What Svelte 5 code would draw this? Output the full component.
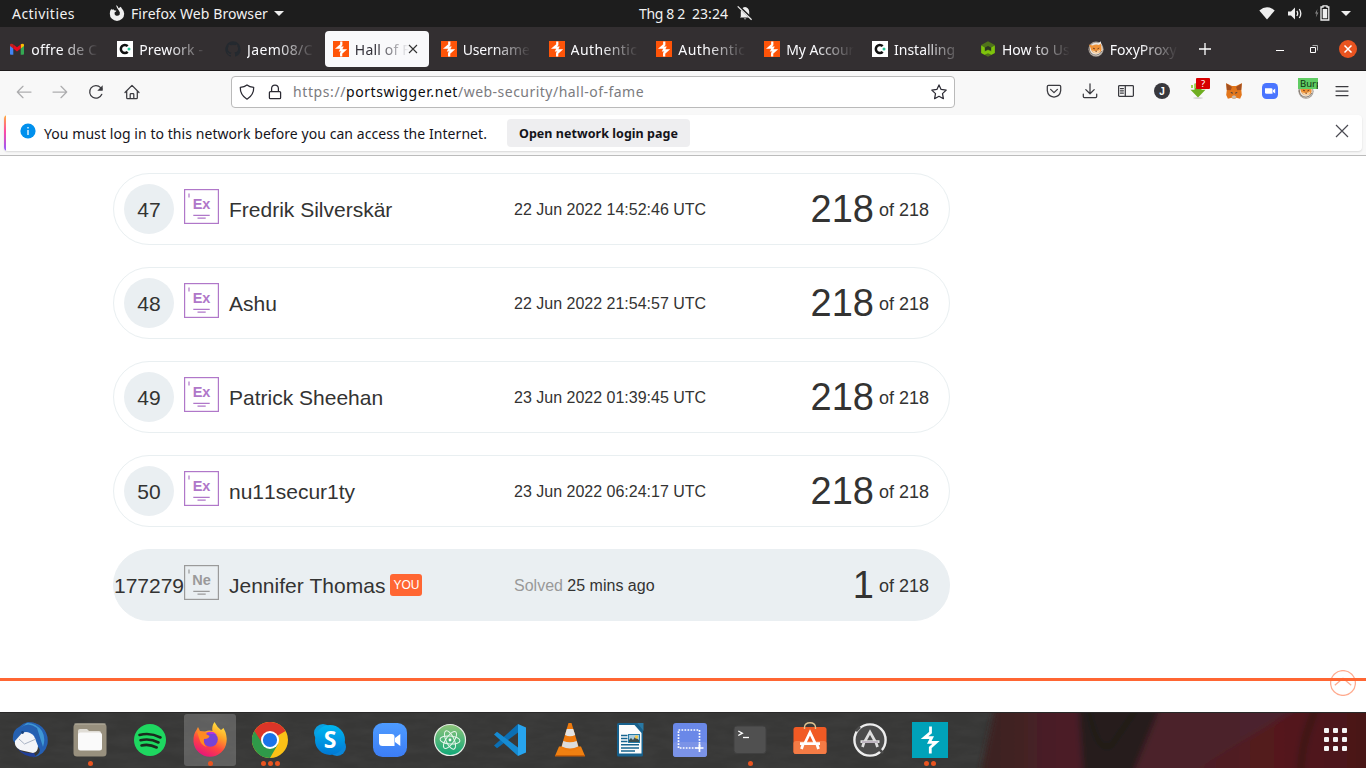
<script>
  const tabs = [
    { icon: 'gmail', title: 'offre de C', w: 66 },
    { icon: 'c', title: 'Prework -', w: 64 },
    { icon: 'github', title: 'Jaem08/C', w: 66 },
    { icon: 'ps', title: 'Hall of F', w: 55, active: true },
    { icon: 'ps', title: 'Username', w: 67 },
    { icon: 'ps', title: 'Authentic', w: 67 },
    { icon: 'ps', title: 'Authentic', w: 67 },
    { icon: 'ps', title: 'My Accour', w: 68 },
    { icon: 'c', title: 'Installing', w: 61 },
    { icon: 'node', title: 'How to Us', w: 68 },
    { icon: 'foxy', title: 'FoxyProxy', w: 67 }
  ];
  const rows = [
    { rank: '47', name: 'Fredrik Silverskär', date: '22 Jun 2022 14:52:46 UTC' },
    { rank: '48', name: 'Ashu', date: '22 Jun 2022 21:54:57 UTC' },
    { rank: '49', name: 'Patrick Sheehan', date: '23 Jun 2022 01:39:45 UTC' },
    { rank: '50', name: 'nu11secur1ty', date: '23 Jun 2022 06:24:17 UTC' }
  ];
  const tools = ['pocket', 'download', 'sidebar', 'account', 'arrow', 'metamask', 'zoom', 'foxyburp', 'menu'];
  const dock = [
    ['thunderbird', 0], ['files', 1], ['spotify', 0], ['firefox', 1], ['chrome', 3], ['skype', 0],
    ['zoom', 0], ['atom', 0], ['vscode', 0], ['vlc', 0], ['writer', 0], ['shot', 0],
    ['terminal', 1], ['software', 0], ['updater', 0], ['burp', 2]
  ];
  const apps = Array.from({ length: 9 });

  // Spreads the letters of a label so that it fills the given width.
  function fit(node, width) {
    const n = node.textContent.length;
    const natural = node.getBoundingClientRect().width;
    node.style.letterSpacing = (width - natural) / n + 'px';
  }
</script>

{#snippet foxyHead()}
  <circle cx="8" cy="8.2" r="7.600" fill="#a39b94" />
  <circle cx="8" cy="8.400" r="6.600" fill="#e9e4de" />
  <path d="M10 3 12.600.3 13.800 4.500z" fill="#f4f1ee" />
  <path d="M.8 3.600 4.600 4.600Q8 2.600 11 4L12.600 2.600 13.400 6Q14.200 8.600 12.400 11 8 13.600 4.600 11 2.800 9 2.600 7z" fill="#ee9238" />
  <path d="M1 6.500Q1.600 14 8 14.200 12 14 14 10" stroke="#7b6f66" stroke-width=".9" fill="none" />
  <path d="M4 9Q6 10.400 8 9.800 10.400 10 12 8.600 12.400 11.600 8.600 12.600 5 12.200 4 9Z" fill="#f9d3a4" />
  <path d="M5 7.200 7 7.900M9.400 8 11.200 7M7.400 10.200h1.600" stroke="#7a4320" stroke-width="1" fill="none" />
{/snippet}

{#snippet bolt(color, width)}
  <path d="M18.500 4.500V10.500L12.500 15.700H19.700L17.300 20.300H24L18.300 25.500V31.500" fill="none" stroke={color} stroke-width={width} />
{/snippet}

{#snippet favicon(kind)}
  <svg class="fav" viewBox="0 0 16 16">
    {#if kind === 'gmail'}
      <path d="M1 4.2v8.6q0 .9.9.9h2.4V6.9z" fill="#4285f4" />
      <path d="M11.7 13.7h2.4q.9 0 .9-.9V4.2l-3.3 2.6z" fill="#34a853" />
      <path d="M11.7 3.6v4L15 5.1V4q0-1.3-1.3-1.3-.7 0-1.3.4z" fill="#fbbc04" />
      <path d="M4.3 7.6v-4L8 6.3l3.7-2.7v4L8 10.4z" fill="#ea0a1c" />
      <path d="M1 4v1.1l3.3 2.5v-4l-.7-.5Q3 2.6 2.3 2.7 1 2.8 1 4z" fill="#c5221f" />
    {:else if kind === 'c'}
      <rect width="16" height="16" fill="#fff" />
      <path d="M10.7 5.2A4 4 0 1 0 10.7 10.8" stroke="#111" stroke-width="2.5" fill="none" />
      <circle cx="12" cy="8" r="1.5" fill="#27c498" />
    {:else if kind === 'github'}
      <path fill="#24292f" d="M8 .2a8 8 0 0 0-2.5 15.5c.4 0 .5-.2.5-.4v-1.4c-2.200.5-2.700-1-2.700-1-.4-.9-.9-1.200-.9-1.200-.7-.5.1-.5.1-.5.8.1 1.200.8 1.200.8.7 1.200 1.900.9 2.300.7 0-.5.3-.9.5-1.100-1.800-.2-3.600-.9-3.600-4 0-.9.3-1.600.8-2.100-.1-.2-.4-1 .1-2.100 0 0 .7-.2 2.200.8a7.500 7.500 0 0 1 4 0c1.500-1 2.200-.8 2.200-.8.4 1.100.2 1.900.1 2.100.5.6.8 1.300.8 2.100 0 3.100-1.900 3.700-3.700 3.900.3.3.6.8.6 1.500v2.200c0 .2.100.5.500.400A8 8 0 0 0 8 .2z" />
    {:else if kind === 'ps'}
      <rect width="16" height="16" fill="#ff5408" />
      <g transform="translate(-2 -2) scale(.555)">{@render bolt('#fff', 4)}</g>
    {:else if kind === 'node'}
      <path d="M8 .2 14.800 4v8L8 15.800 1.200 12V4z" fill="#50731a" />
      <path d="M1.200 4.500 4.700 6.400V10.500L8 9l3.300 1.500V6.400L14.800 4.500V12L11.500 13.800 8 12.300 4.500 13.800 1.200 12z" fill="#7fc40c" />
      <path d="M5 6.600 8 5l3 1.600v3L8 8.500 5 9.800z" fill="#2c3522" />
    {:else}
      {@render foxyHead()}
    {/if}
  </svg>
{/snippet}

{#snippet camera()}
  <path d="M3 5.200h6.200q1.300 0 1.300 1.300v4.300H4.500Q3 10.800 3 9.500z" fill="#fff" />
  <path d="M11 7.300 13.200 5.600v4.900L11 9z" fill="#fff" />
{/snippet}

<div class="screen">
  <header class="topbar">
    <span class="activities"><span use:fit={63}>Activities</span></span>
    <svg class="ffglyph" viewBox="0 0 16 16"><path d="M7 .3C8.700 1 9.300 2.200 9.500 3.300L11.900 1.800Q12.300 3 13.400 4.200 15.200 6 15.200 8.700A7.200 7.200 0 0 1 .8 8.700Q.7 6 2.300 3.800L3 5 4.200 3.900 5 5.300 7.500 5.700Q6.900 7 5.700 7.200 5 9.400 6.700 10.500 9 11.500 10.600 9.700 11.600 7.400 9.800 5.500 8 3.600 7 .3Z" fill="#eee" /></svg>
    <span class="app"><span use:fit={137}>Firefox Web Browser</span></span>
    <i class="caret"></i>
    <span class="clock"><span use:fit={46}>Thg 8 2</span><span class="time" use:fit={36}>23:24</span></span>
    <svg class="bell" viewBox="0 0 16 16"><path d="M3.800 11.500V6.500Q4.200 2.500 8 2q3.800.5 4.200 4.500v5l1 1H3zM6.800 13.500h2.600q-1.300 1.700-2.600 0z" fill="#eee" /><path d="M1.200.8 15.200 14.300" stroke="#1d1d1d" stroke-width="2.600" /><path d="M.7 1.400 14.600 14.800" stroke="#eee" stroke-width="1.300" /></svg>
    <svg class="wifi" viewBox="0 0 16 16"><path d="M.3 4.500Q8-2.200 15.700 4.500L8 13.600z" fill="#eee" /></svg>
    <svg class="vol" viewBox="0 0 16 16"><path d="M1 5.500h3l4-4v12l-4-4H1z" fill="#eee" /><path d="M9.800 5q1.800 2.400 0 5M12.300 3q3 4.500 0 9" stroke="#eee" stroke-width="1.300" fill="none" /></svg>
    <svg class="bat" viewBox="0 0 16 16"><path d="M3.500 4 1 8.600h1.600L1.800 12.500 4.400 7.500H2.800z" fill="#888" /><path d="M7 2h2V.9h4V2h1.800v13H7z" fill="none" stroke="#eee" stroke-width="1.300" /><path d="M8.700 4h4.500v9.300H8.700z" fill="#eee" /></svg>
    <i class="caret"></i>
  </header>

  <nav class="tabs">
    {#each tabs as t}
      <div class="tab" class:active={t.active}>
        {@render favicon(t.icon)}
        <span class="title"><span use:fit={t.w}>{t.title}</span></span>
        {#if t.active}
          <svg class="x" viewBox="0 0 10 10"><path d="M1 1l8 8M9 1 1 9" stroke="#333" stroke-width="1.100" /></svg>
        {/if}
      </div>
    {/each}
    <svg class="plus" viewBox="0 0 12 12"><path d="M6 0v12M0 6h12" stroke="#fff" stroke-width="1.300" /></svg>
    <svg class="min" viewBox="0 0 8 8"><path d="M0 5.500h8" stroke="#fff" /></svg>
    <svg class="max" viewBox="0 0 8 8"><path d="M.5 2.500h5v5h-5z" stroke="#fff" fill="none" /><path d="M2.500.5h5v5" stroke="#aaa" fill="none" /></svg>
    <svg class="close" viewBox="0 0 18 18"><circle cx="9" cy="9" r="9" fill="#e95420" /><path d="M5.500 5.500l7 7M12.500 5.500l-7 7" stroke="#fff" stroke-width="1.500" /></svg>
  </nav>

  <div class="toolbar">
    <div class="navs">
      <svg viewBox="0 0 16 16"><path d="M15 8H1.500M7 2.300 1.300 8 7 13.700" class="ln dim" /></svg>
      <svg viewBox="0 0 16 16"><path d="M1 8h13.500M9 2.300 14.700 8 9 13.700" class="ln dim" /></svg>
      <svg viewBox="0 0 16 16"><path d="M13.800 10.300A6.300 6.300 0 1 1 12.600 3.600L14 5" class="ln" /><path d="M14.700 1.300v5.400H9.300z" fill="#3a3a3f" /></svg>
      <svg viewBox="0 0 16 16"><path d="M1 8.500 8 1.400l7 7.100M2.700 7v6.800q0 .9.900.9h8.800q.9 0 .9-.9V7M6.200 14.500v-4q0-.8.800-.8h2q.8 0 .8.800v4" class="ln" /></svg>
    </div>
    <div class="url">
      <svg viewBox="0 0 16 16"><path d="M8 .9Q10.500 3 14.700 3.300 15 11 8 15.200 1 11 1.300 3.300 5.500 3 8 .9z" class="ln dark" /></svg>
      <svg viewBox="0 0 16 16"><path d="M3.400 7.500h9.200q1 0 1 1v5.200q0 1-1 1H3.400q-1 0-1-1V8.500q0-1 1-1zM4.600 7.300V4.200q.2-3.200 3.400-3.200t3.400 3.200v3.100" class="ln dark" /></svg>
      <span class="addr"><span use:fit={53}>https://</span><b use:fit={112}>portswigger.net</b><span use:fit={186}>/web-security/hall-of-fame</span></span>
      <svg viewBox="0 0 16 16" class="star"><path d="M8 .9 10.100 5.400 15.200 6.100 11.500 9.600 12.400 14.700 8 12.300 3.600 14.700 4.500 9.600.8 6.100 5.900 5.400z" class="ln dark" /></svg>
    </div>
    <div class="tools">
      {#each tools as k}
        <div class="tool">
          <svg viewBox="0 0 16 16">
            {#if k === 'pocket'}
              <path d="M2.500 2.400h11q1.200 0 1.200 1.200v4Q14 13.500 8 14.100 2 13.500 1.300 7.600v-4q0-1.200 1.200-1.200zM4.600 6.400 8 9.600l3.400-3.200" class="ln" />
            {:else if k === 'download'}
              <path d="M8 .8v9.800M3.800 6.600 8 10.800l4.200-4.200M1.300 11v2.600q0 1.100 1.100 1.100h11.200q1.100 0 1.100-1.100V11" class="ln" />
            {:else if k === 'sidebar'}
              <path d="M1.500 2.700h13q.9 0 .9.900v8.800q0 .9-.9.900h-13q-.9 0-.9-.9V3.600q0-.9.900-.9zM7.300 2.700v10.600M2.400 5.500h3M2.400 7.800h3M2.400 10.100h3" class="ln" />
            {:else if k === 'account'}
              <circle cx="8" cy="8" r="8" fill="#38383d" />
              <text x="8" y="11.600" text-anchor="middle" font-size="10" font-weight="700" fill="#fff">J</text>
            {:else if k === 'arrow'}
              <path d="M4.500.5h7v6.200h4L8 14.600.5 6.700h4z" fill="#6fae21" /><path d="M1 2h2v3H1zM4.500 1h2v4h-2z" fill="#9bd44b" /><ellipse cx="8" cy="15" rx="5" ry=".7" fill="#ccc" />
            {:else if k === 'metamask'}
              <path d="M.2.300 6 3h4L15.800.300l-.5 6.700.5 5-1.700 3.700-3.800-1-1.300 1H7l-1.300-1-3.800 1L.2 12 .8 7z" fill="#e2761b" />
              <path d="M.2.300 5.900 4 4.800 7.300.800 7.100zM15.800.300 10.100 4l1.100 3.300 4-.2z" fill="#a5501f" />
              <path d="M5.700 13.800 7 12.500h2l1.300 1.300L9 15.800H7z" fill="#c8bcae" /><path d="M4.300 9l2.300.4-.2 1.600zM11.700 9l-2.300.4.2 1.600z" fill="#233447" />
            {:else if k === 'zoom'}
              <rect width="16" height="16" rx="4.500" fill="#4a75ff" />
              {@render camera()}
            {:else if k === 'foxyburp'}
              {@render foxyHead()}
            {:else}
              <path d="M2 3.500h12M2 8h12M2 12.500h12" class="ln" />
            {/if}
          </svg>
          {#if k === 'arrow'}<span class="q">?</span>{/if}
          {#if k === 'foxyburp'}<span class="burp">Burp</span>{/if}
        </div>
      {/each}
    </div>
  </div>

  <div class="noticewrap">
    <div class="notice">
      <i class="stripe"></i>
      <svg class="info" viewBox="0 0 16 16"><circle cx="8" cy="8" r="7.600" fill="#0090ed" /><path d="M8 7v5M8 4v1.500" stroke="#fff" stroke-width="1.300" /></svg>
      <span class="msg"><span use:fit={443}>You must log in to this network before you can access the Internet.</span></span>
      <button><span use:fit={159}>Open network login page</span></button>
      <svg class="dismiss" viewBox="0 0 14 14"><path d="M1 1l12 12M13 1 1 13" stroke="#4a4a52" stroke-width="1.200" /></svg>
    </div>
  </div>

  {#snippet badge(label, color)}
    <svg class="badge" viewBox="0 0 35 35">
      <rect x=".6" y=".6" width="33.800" height="33.800" fill="none" stroke={color} stroke-width="1.200" />
      <path d="M5 4.500v4" stroke={color} stroke-width="1.200" />
      <text x="17.500" y="20" text-anchor="middle" font-size="14.500" font-weight="700" fill={color}>{label}</text>
      <path d="M9.300 26.300h16.400M13.500 29.200h8.200" stroke={color} stroke-width="1.200" />
    </svg>
  {/snippet}

  <main>
    {#each rows as r}
      <div class="row">
        <span class="rank">{r.rank}</span>
        {@render badge('Ex', '#b077c9')}
        <span class="name">{r.name}</span>
        <span class="date">{r.date}</span>
        <span class="score"><big>218</big><span>of 218</span></span>
      </div>
    {/each}
    <div class="row me">
      <span class="rank">177279</span>
      {@render badge('Ne', '#9a9a9a')}
      <span class="name">Jennifer Thomas<em>YOU</em></span>
      <span class="date"><span class="grey">Solved</span> 25 mins ago</span>
      <span class="score"><big>1</big><span>of 218</span></span>
    </div>
    <hr />
    <svg class="totop" viewBox="0 0 26 26"><circle cx="13" cy="13" r="12.400" fill="none" stroke="#ff6633" stroke-width="1.300" /><path d="M4.800 15.200 13 8.300l8.200 6.900" fill="none" stroke="#ff6633" stroke-width="1.300" /></svg>
  </main>

  <footer class="dock">
    <svg class="wall" viewBox="0 0 1366 56" preserveAspectRatio="none">
      <defs>
        <linearGradient id="mar" x1="0" x2="1"><stop offset="0" stop-color="#3a211f" /><stop offset=".2" stop-color="#4b1f28" /><stop offset="1" stop-color="#4d2430" /></linearGradient>
        <linearGradient id="red" x1="0" x2="1"><stop offset="0" stop-color="#4c2129" /><stop offset=".5" stop-color="#54191b" /><stop offset="1" stop-color="#481719" /></linearGradient>
        <filter id="soft"><feGaussianBlur stdDeviation="3" /></filter>
        <filter id="grain" x="0" y="0" width="100%" height="100%"><feTurbulence type="fractalNoise" baseFrequency=".035 .12" numOctaves="3" seed="4" /><feColorMatrix values="0 0 0 0 .6  0 0 0 0 .6  0 0 0 0 .58  .35 0 0 0 -.1" /></filter>
      </defs>
      <rect width="1366" height="56" fill="#373736" />
      <rect width="1000" height="56" filter="url(#grain)" opacity=".2" />
      <g filter="url(#soft)">
        <path d="M996-8H1374V64H980Z" fill="url(#mar)" />
        <path d="M1078-8h84L1132 64H1083z" fill="#261b1a" />
        <path d="M1088-8Q1096 42 1111 34L1140-8" fill="none" stroke="#1c1a19" stroke-width="4" />
        <path d="M1305-8Q1240 30 1185 64H1376V-8z" fill="url(#red)" />
        <path d="M1318-8Q1300 30 1301 64" fill="none" stroke="#3b1516" stroke-width="7" />
      </g>
      <path d="M0 .5h1366" stroke="#2a2929" />
    </svg>
    {#each dock as [k, dots]}
      <div class="slot" class:lit={k === 'firefox'}>
        <svg viewBox="0 0 36 36">
          {#if k === 'thunderbird'}
            <path d="M14 1Q23-1 30 5 37 12 35.500 22 33 33 21 35.500 30 31 27 26L10 9Q13 4 20 3z" fill="#2560b5" />
            <path d="M1 15Q1 8 7 5 11 1 16 0 28 0 33 11 36 20 30 27 29 17 23 12 16 7 9 12L3 21Q0 18 1 15z" fill="#2560b0" />
            <path d="M8 6Q16-1 25 6L31 25Q34 16 30 9 24 1 15 1z" fill="#3f97d4" />
            <path d="M3 19 10 11Q16 8 22 14L26 24Q26 30 21 31L8 28Q2 25 3 19z" fill="#f4f5f8" />
            <path d="M7 17 12.500 22 24 17" fill="none" stroke="#a9b3c4" stroke-width="1" />
            <path d="M5 26Q10 32 22 31L24 35Q11 35 5 26z" fill="#203f9a" /><circle cx="10.500" cy="10.500" r="1.400" fill="#17427d" />
          {:else if k === 'files'}
            <rect x="1.500" y="1.500" width="33" height="33" rx="3.500" fill="#98907e" /><rect x="2.500" y="1.500" width="31" height="1" fill="#b8b2a2" />
            <path d="M6 9q0-2 2-2h7l2 2h10q2 0 2 2v15H6z" fill="#e0ddd6" /><rect x="6" y="10.500" width="24" height="18" rx="2.500" fill="#fafafa" />
          {:else if k === 'spotify'}
            <circle cx="18" cy="18" r="16" fill="#1ed760" />
            <path d="M7.500 13Q18 10 28.500 15.500M8.500 18.300Q18 16 26.500 20.500M9.500 23.500Q17 21.500 24.700 25.500" stroke="#1a2a1e" fill="none" stroke-linecap="round" stroke-width="2.600" />
          {:else if k === 'firefox'}
            <defs><linearGradient id="fx" x1=".8" y1="0" x2=".3" y2="1"><stop offset="0" stop-color="#ffec45" /><stop offset=".35" stop-color="#ffa227" /><stop offset=".65" stop-color="#ff4540" /><stop offset="1" stop-color="#e5127f" /></linearGradient></defs>
            <path d="M22.500 0Q25 5 29 8L31.500 6Q35.500 13 34.500 20A16.600 16.600 0 0 1 1.500 20Q1 12 4.500 8L6 5 8 9 13 9.500Q17 8 20.500 9 19.500 4 22.500 0z" fill="url(#fx)" />
            <circle cx="18.500" cy="17.500" r="7.300" fill="#7543d7" /><path d="M5 9Q12 10 14 12L17.500 14Q17 17 12 17 11 22 15 25 9 24 7 16z" fill="#ff8a22" />
            <path d="M14 11Q22 7 26 15 24 11 20 12z" fill="#b833e1" />
          {:else if k === 'chrome'}
            <circle cx="18" cy="18" r="18" fill="#fbc116" />
            <path d="M18 18 2.400 9A18 18 0 0 1 33.600 9z" fill="#db3528" />
            <path d="M2.400 9A18 18 0 0 0 18 36L25.800 22.500H18Z" fill="#2f9a49" />
            <path d="M2.400 9H18V14L8 12z" fill="#db3528" /><path d="M2.400 9 10.200 22.500 13 16z" fill="#2f9a49" />
            <path d="M2.400 9H18L11 14 9.500 20z" fill="#db3528" />
            <circle cx="18" cy="18" r="9" fill="#fff" /><circle cx="18" cy="18" r="7.100" fill="#1a73e8" />
          {:else if k === 'skype'}
            <defs><linearGradient id="sk" x2="0" y2="1"><stop offset="0" stop-color="#00b7f0" /><stop offset="1" stop-color="#0078d4" /></linearGradient></defs>
            <circle cx="11" cy="11" r="9" fill="#0a9fe0" /><circle cx="25" cy="25" r="9" fill="#0b86d8" /><circle cx="18" cy="18" r="15" fill="url(#sk)" />
            <text x="18" y="26.300" font-size="23" font-weight="700" text-anchor="middle" fill="#fff">S</text>
          {:else if k === 'zoom'}
            <defs><linearGradient id="zm" x2="0" y2="1"><stop offset="0" stop-color="#4d9bff" /><stop offset="1" stop-color="#3c7df5" /></linearGradient></defs>
            <rect x="1" y="1" width="34" height="34" rx="9.500" fill="url(#zm)" />
            <path d="M7 12h12.500q3 0 3 3v9H10.500Q7 24 7 20.500z" fill="#fff" /><path d="M23 16 28.300 12V24L23 20z" fill="#fff" />
          {:else if k === 'atom'}
            <defs><linearGradient id="at" x2="0" y2="1"><stop offset="0" stop-color="#8fc47a" /><stop offset="1" stop-color="#10a878" /></linearGradient></defs>
            <circle cx="18" cy="18" r="15.500" fill="url(#at)" stroke="#e5ebe4" stroke-width="1.200" />
            <g fill="none" stroke="#e7f6ec" stroke-width="1"><ellipse cx="18" cy="18" rx="10" ry="4" transform="rotate(5 18 18)" /><ellipse cx="18" cy="18" rx="10" ry="4" transform="rotate(65 18 18)" /><ellipse cx="18" cy="18" rx="10" ry="4" transform="rotate(125 18 18)" /></g><circle cx="18" cy="18" r="1.400" fill="#fff" />
          {:else if k === 'vscode'}
            <path d="M2 23.500 5 26.300 26 10.500V2z" fill="#0b6fb4" /><path d="M2 12.500 5 9.700 26 25.500V34z" fill="#168bd2" /><path d="M26 2 34 5.500V30.500L26 34z" fill="#27a4ee" />
          {:else if k === 'vlc'}
            <path d="M7 24.500H29L33 34H3z" fill="#f08011" /><path d="M3 33H33v1.500H3z" fill="#c95f06" />
            <path d="M16.500 1h3L27 26Q18 31.500 9 26z" fill="#ef7a0d" /><path d="M14.800 7h6.400l2 6Q18 15.500 13 13z" fill="#e3e3e3" /><path d="M11.300 19Q18 21.500 24.700 19l1.500 5.500Q18 28.500 9.800 24.500z" fill="#dcdcdc" />
          {:else if k === 'writer'}
            <path d="M6.500 1H25L31 8V33q0 1.500-1.500 1.500h-23Q5 34.500 5 33V2.500Q5 1 6.500 1z" fill="#17618d" /><path d="M25 1h6.500v8z" fill="#2878a4" />
            <path d="M7 3H22.500L29.500 11V31.500H7z" fill="#fbfcfc" />
            <path d="M9 13.500h6.500M9 16.500h6.500M9 19.500h6.500M9 22.700h18M9 26h18M9 29h14" stroke="#17648f" stroke-width="1.500" /><rect x="16.500" y="12.500" width="11" height="8" fill="#a9cddf" stroke="#277ba5" /><path d="M17 20v-2l2-2 2 2 2-3 4 3v2z" fill="#3c4e4f" /><circle cx="24.500" cy="15" r="1.700" fill="#f1c849" />
          {:else if k === 'shot'}
            <rect x="1" y="1" width="34" height="34" rx="3" fill="#6a88e8" /><rect x="1" y="20" width="34" height="15" rx="3" fill="#7b93e7" />
            <rect x="6.500" y="8" width="21" height="18" fill="none" stroke="#fff" stroke-width="1.700" stroke-dasharray="1.700 1.300" /><path d="M27.500 22v8M23.500 26h8" stroke="#fff" stroke-width="1.700" />
          {:else if k === 'terminal'}
            <rect x="2" y="4" width="32" height="27.500" rx="3" fill="#505050" stroke="#404040" /><path d="M6.300 9l4 2.200-4 2.300" stroke="#fff" stroke-width="1.400" fill="none" /><path d="M11 15.500h6" stroke="#fff" stroke-width="1.300" />
          {:else if k === 'software'}
            <rect x="1.500" y="5" width="33" height="27" rx="2.500" fill="#f15a24" /><rect x="1.500" y="19" width="33" height="13" rx="2.500" fill="#f47b45" /><path d="M12.500 7V5Q13 .8 18 .8t5.500 4.200v2" fill="none" stroke="#dfc391" stroke-width="1.400" />
            <path d="M12.500 22 18 10.500 23.500 22M8 21.700h20M11 22.500 9.500 27M25 22.500 26.500 27" fill="none" stroke="#fff" stroke-width="2.800" />
          {:else if k === 'updater'}
            <circle cx="18" cy="18" r="15.600" fill="#4c4c4c" stroke="#ededed" stroke-width="2.400" />
            <path d="M4 9l4-4M27 27l4 4" stroke="#4c4c4c" stroke-width="2.600" />
            <path d="M12.500 20 18 10 23.500 20M8.500 19.700h19M12 20.500 10.500 25M24 20.500 25.500 25" fill="none" stroke="#dedede" stroke-width="2.700" /><path d="M10 20h16" stroke="#8f7895" stroke-width=".8" />
          {:else}
            <rect width="36" height="36" fill="#00a2b9" />
            {@render bolt('#fff', 2.800)}
          {/if}
        </svg>
        <span class="dots">{#each { length: dots } as _}<i></i>{/each}</span>
      </div>
    {/each}
    <div class="apps">{#each apps as _}<i></i>{/each}</div>
  </footer>
</div>

<style>
  :global(body) { margin: 0; overflow: hidden; background: #fff; }
  .screen { width: 1366px; height: 768px; display: flex; flex-direction: column; font-family: "Noto Sans", "Open Sans", sans-serif; font-size: 14px; overflow: hidden; }
  .screen * { box-sizing: border-box; }
  svg { display: block; flex: none; }
  span { white-space: nowrap; }
  .topbar { height: 27px; background: #1d1d1d; color: #f2f2f2; display: flex; align-items: center; flex: none; padding-left: 12px; }
  .activities { width: 97px; }
  .ffglyph { width: 16px; height: 16px; margin-top: -1px; }
  .app { width: 149px; padding-left: 6px; }
  .caret { width: 10px; height: 5px; background: #eee; clip-path: polygon(0 0, 100% 0, 50% 100%); }
  .clock { margin-left: 355px; width: 98px; display: flex; }
  .time { margin-left: 7px; }
  .bell { width: 16px; height: 16px; margin-top: -2px; }
  .wifi { width: 16px; height: 16px; margin-left: 506px; }
  .vol { width: 16px; height: 16px; margin: 0 0 0 12px; }
  .bat { width: 16px; height: 16px; margin: -2px 11px 0 11px; }
  .tabs { height: 44px; background: #332f31; border-bottom: 1px solid #1e1b1c; display: flex; align-items: center; flex: none; padding-left: 1px; color: #fbfbfe; }
  .tab { width: 104px; height: 36px; margin-right: 3.85px; border-radius: 4px; display: flex; align-items: center; padding-left: 8px; flex: none; }
  .tab.active { background: #f9f9fb; color: #33313a; }
  .fav { width: 16px; height: 16px; margin: 0 6px 0 .3px; }
  .title { width: 70px; overflow: hidden; padding-top: 1px; mask-image: linear-gradient(to right, #000 30px, transparent 68px); }
  .active .title { width: 55px; mask-image: linear-gradient(to right, #000 22px, transparent 54px); }
  .x { width: 10px; height: 10px; margin-left: -2px; }
  .plus { width: 12px; height: 12px; margin-left: 11.65px; }
  .min { width: 8px; height: 8px; margin-left: 65px; }
  .max { width: 8px; height: 8px; margin-left: 26px; }
  .close { width: 18px; height: 18px; margin-left: 21px; }
  .toolbar { height: 41px; background: #f8f8f8; flex: none; display: flex; align-items: center; }
  .navs { display: flex; gap: 20px; padding-left: 16px; width: 231px; }
  .navs svg, .url svg, .tool svg { width: 16px; height: 16px; }
  .ln { fill: none; stroke: #3a3a3f; stroke-width: 1.25; stroke-linejoin: round; stroke-linecap: round; }
  .ln.dim { stroke: #adadaf; }
  .ln.dark { stroke: #2b2a33; }
  .url { width: 724px; height: 32px; background: #fff; border: 1px solid #bababa; border-radius: 4px; display: flex; align-items: center; padding: 0 7px; }
  .url svg + svg { margin-left: 12px; }
  .addr { margin-left: 10px; color: #7b7b80; flex: 1; display: flex; }
  .addr b { color: #0c0c0d; font-weight: 400; }
  .tools { display: flex; margin-left: 81px; }
  .tool { width: 36px; height: 32px; display: flex; align-items: center; justify-content: center; position: relative; padding-bottom: 1px; }
  .q, .burp { position: absolute; top: 2px; height: 11px; line-height: 11px; font-size: 9.500px; }
  .q { left: 16px; width: 14px; background: #d70000; color: #fff; text-align: center; border-radius: 1px; }
  .burp { left: 10px; width: 20px; background: #60cc63; color: #10330f; overflow: hidden; padding-left: 2px; }
  .noticewrap { height: 44px; flex: none; background: #f8f8f8; border-bottom: 1px solid #bcbcbc; padding: 3px 4px 4px; }
  .notice { height: 36px; background: #fff; border-radius: 4px; display: flex; align-items: center; box-shadow: 0 1px 2px rgba(0, 0, 0, .13); overflow: hidden; color: #15141a; }
  .stripe { width: 2px; height: 36px; background: linear-gradient(#ffb03b, #ff4aa2 45%, #9059ff); }
  .info { width: 16px; height: 16px; margin: -4px 8px 0 14px; }
  .msg { width: 463px; }
  button { width: 183px; height: 28px; border: 0; border-radius: 4px; padding: 0; background: #eeeef0; color: #15141a; font: 700 12.500px "Noto Sans", sans-serif; }
  .dismiss { width: 14px; height: 14px; margin: -5px 0 0 645px; }
  main { height: 556px; flex: none; background: #fff; position: relative; padding-top: 17px; font-family: "Liberation Sans", sans-serif; color: #333332; }
  main svg text, .tool text { font-family: "Liberation Sans", sans-serif; }
  .row { width: 837px; height: 72px; margin: 0 0 22px 113px; border: 1px solid #e9eff1; border-radius: 36px; display: flex; align-items: center; padding: 0 20px 0 10px; }
  .rank { width: 50px; height: 50px; border-radius: 50%; background: #eaeff2; display: flex; align-items: center; justify-content: center; font-size: 21px; padding-top: 2px; }
  .badge { width: 35px; height: 35px; margin: -5px 10px 0; }
  .name { width: 285px; font-size: 21px; padding-top: 2px; display: flex; align-items: center; font-kerning: none; }
  .date { font-size: 16px; width: 230px; padding-top: 2px; }
  .score { flex: 1; display: flex; justify-content: flex-end; align-items: center; font-size: 18px; }
  .score span { padding-top: 2px; }
  big { font-size: 38px; margin-right: 5px; line-height: 44px; }
  .me { background: #eaeff2; border-color: #eaeff2; margin-bottom: 57px; }
  .grey { color: #999; }
  em { font-style: normal; font-size: 12px; line-height: 22px; background: #ff6633; color: #fff; border-radius: 3px; width: 32px; text-align: center; margin: -3px 0 0 5px; }
  hr { margin: 0; border: 0; height: 3px; background: #ff6633; }
  .totop { position: absolute; right: 10px; top: 514px; width: 26px; height: 26px; opacity: .55; }
  .dock { height: 56px; flex: none; position: relative; display: flex; background: #383837; }
  .wall { position: absolute; inset: 0; width: 1366px; height: 56px; }
  .slot { width: 52px; height: 52px; margin: 2px 4px; border-radius: 3px; position: relative; display: flex; flex-direction: column; align-items: center; padding-top: 8px; }
  .lit { background: rgba(255, 255, 255, .2); }
  .slot svg { width: 36px; height: 36px; }
  .dots { display: flex; gap: 2px; margin-top: 3px; }
  .dots i { width: 5px; height: 5px; border-radius: 50%; background: #e95420; }
  .apps { position: relative; display: grid; grid-template-columns: repeat(3, 5px); grid-auto-rows: 5px; gap: 4px; margin: 16px 0 0 364px; }
  .apps i { background: #f5f5f5; border-radius: 1px; }
</style>
